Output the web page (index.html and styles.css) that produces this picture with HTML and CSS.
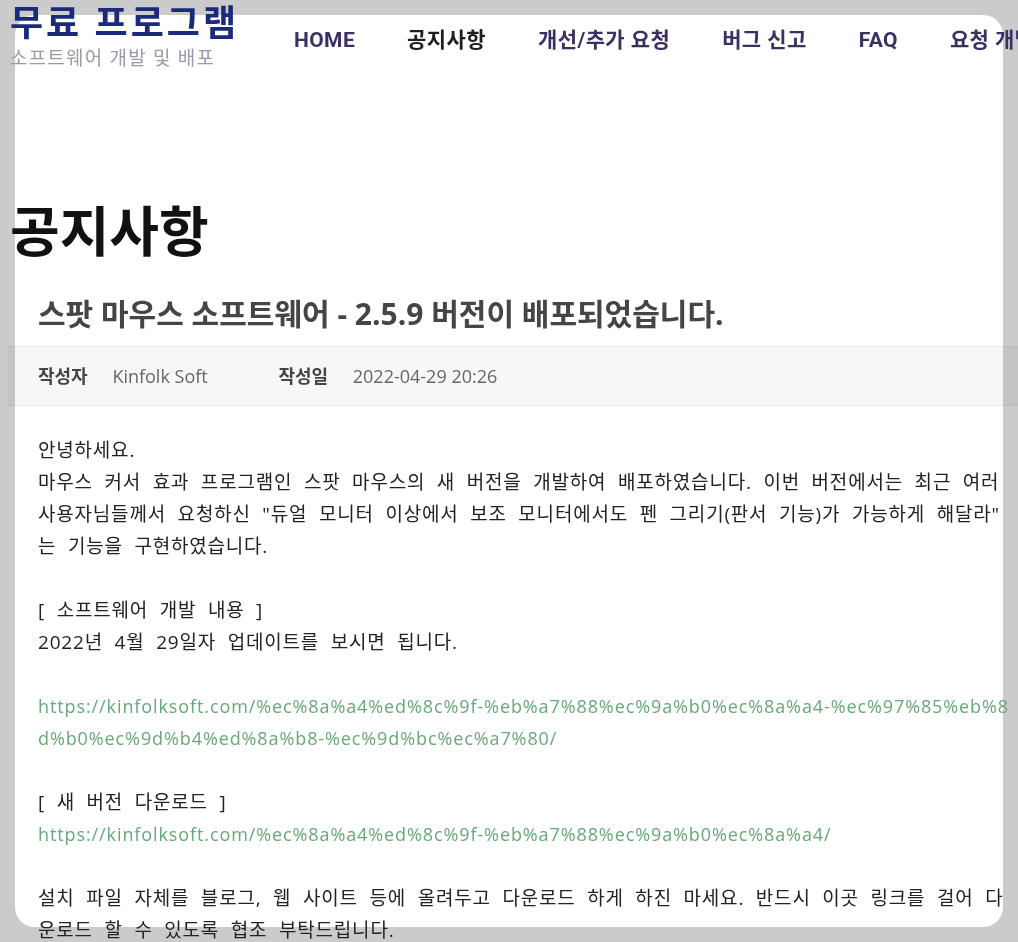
FILE: index.html
```html
<!DOCTYPE html>
<html lang="ko">
<head>
  <meta charset="UTF-8">
  <meta name="viewport" content="width=device-width, initial-scale=1.0">
  <title>공지사항 - 무료 프로그램</title>
  <link rel="stylesheet" href="styles.css">
</head>
<body>
  <div class="backdrop"></div>
  <div class="page">
    <header class="site-header">
      <div class="brand">
        <div class="site-title">무료 프로그램</div>
        <div class="site-desc">소프트웨어 개발 및 배포</div>
      </div>
      <nav class="main-nav">
        <a href="#">HOME</a>
        <a href="#" class="active">공지사항</a>
        <a href="#">개선/추가 요청</a>
        <a href="#">버그 신고</a>
        <a href="#">FAQ</a>
        <a href="#">요청 개발</a>
      </nav>
    </header>

    <h1 class="page-title">공지사항</h1>

    <h2 class="post-title">스팟 마우스 소프트웨어 - 2.5.9 버전이 배포되었습니다.</h2>

    <div class="post-meta">
      <span class="meta-label">작성자</span>
      <span class="meta-value">Kinfolk Soft</span>
      <span class="meta-label">작성일</span>
      <span class="meta-value">2022-04-29 20:26</span>
    </div>

    <div class="post-body">
      <p>안녕하세요.<br>마우스 커서 효과 프로그램인 스팟 마우스의 새 버전을 개발하여 배포하였습니다. 이번 버전에서는 최근 여러 사용자님들께서 요청하신 "듀얼 모니터 이상에서 보조 모니터에서도 펜 그리기(판서 기능)가 가능하게 해달라" 는 기능을 구현하였습니다.</p>
      <p>[ 소프트웨어 개발 내용 ]<br>2022년 4월 29일자 업데이트를 보시면 됩니다.</p>
      <p><a href="#">https://kinfolksoft.com/%ec%8a%a4%ed%8c%9f-%eb%a7%88%ec%9a%b0%ec%8a%a4-%ec%97%85%eb%8d%b0%ec%9d%b4%ed%8a%b8-%ec%9d%bc%ec%a7%80/</a></p>
      <p>[ 새 버전 다운로드 ]<br><a href="#">https://kinfolksoft.com/%ec%8a%a4%ed%8c%9f-%eb%a7%88%ec%9a%b0%ec%8a%a4/</a></p>
      <p>설치 파일 자체를 블로그, 웹 사이트 등에 올려두고 다운로드 하게 하진 마세요. 반드시 이곳 링크를 걸어 다운로드 할 수 있도록 협조 부탁드립니다.</p>
    </div>
  </div>
</body>
</html>
```

FILE: styles.css
```css
html, body { overflow: hidden; }
body {
  margin: 0;
  background-color: #cbcbcb;
  font-family: "Open Sans", "Noto Sans CJK KR", sans-serif;
  color: #222;
}
.backdrop {
  position: fixed;
  top: 15px;
  left: 15px;
  width: 988px;
  height: 912px;
  background: #fff;
  border-radius: 20px;
  z-index: -1;
}
.page { padding-left: 8px; width: 1010px; }

/* header */
.site-header { display: flex; align-items: flex-start; height: 70px; }
.brand { width: 284px; flex-shrink: 0; padding: 2px 0 0 2px; }
.site-title {
  font-size: 36px;
  line-height: 42px;
  font-weight: 700;
  letter-spacing: 3px;
  color: #1b2a7b;
}
.site-desc {
  margin-top: 3px;
  font-size: 19px;
  line-height: 22px;
  letter-spacing: 1.2px;
  color: #9a9aa8;
}
.main-nav { display: flex; gap: 52px; padding-top: 27px; white-space: nowrap; }
.main-nav a {
  font-family: Roboto, "Noto Sans CJK KR", sans-serif;
  font-size: 21px;
  line-height: 26px;
  font-weight: 700;
  letter-spacing: 0.4px;
  color: #3b2f63;
  text-decoration: none;
}
.main-nav a.active { color: #1f1f1f; }

/* post */
.page-title {
  margin: 129px 0 0 2px;
  font-size: 54px;
  line-height: 64px;
  font-weight: 700;
  color: #111;
}
.post-title {
  margin: 31px 0 0;
  padding-left: 30px;
  font-size: 30px;
  line-height: 40px;
  font-weight: 700;
  color: #454545;
}
.post-meta {
  margin-top: 12px;
  padding-left: 30px;
  height: 58px;
  line-height: 58px;
  background: rgba(0, 0, 0, 0.03);
  border-top: 1px solid rgba(0, 0, 0, 0.06);
  border-bottom: 1px solid rgba(0, 0, 0, 0.06);
  font-size: 18px;
}
.meta-label { font-weight: 700; color: #444; margin-right: 20px; }
.meta-value { color: #666; margin-right: 66px; }

.post-body {
  margin: 28px 8px 0 0;
  padding-left: 30px;
  font-size: 19px;
  line-height: 32px;
  letter-spacing: 0.8px;
  word-spacing: 5.9px;
  color: #222;
}
.post-body p { margin: 0 0 32px; }
.post-body a {
  font-size: 18px;
  color: #67a97a;
  text-decoration: none;
  letter-spacing: 0.9px;
  word-spacing: normal;
  word-break: break-all;
}
```
